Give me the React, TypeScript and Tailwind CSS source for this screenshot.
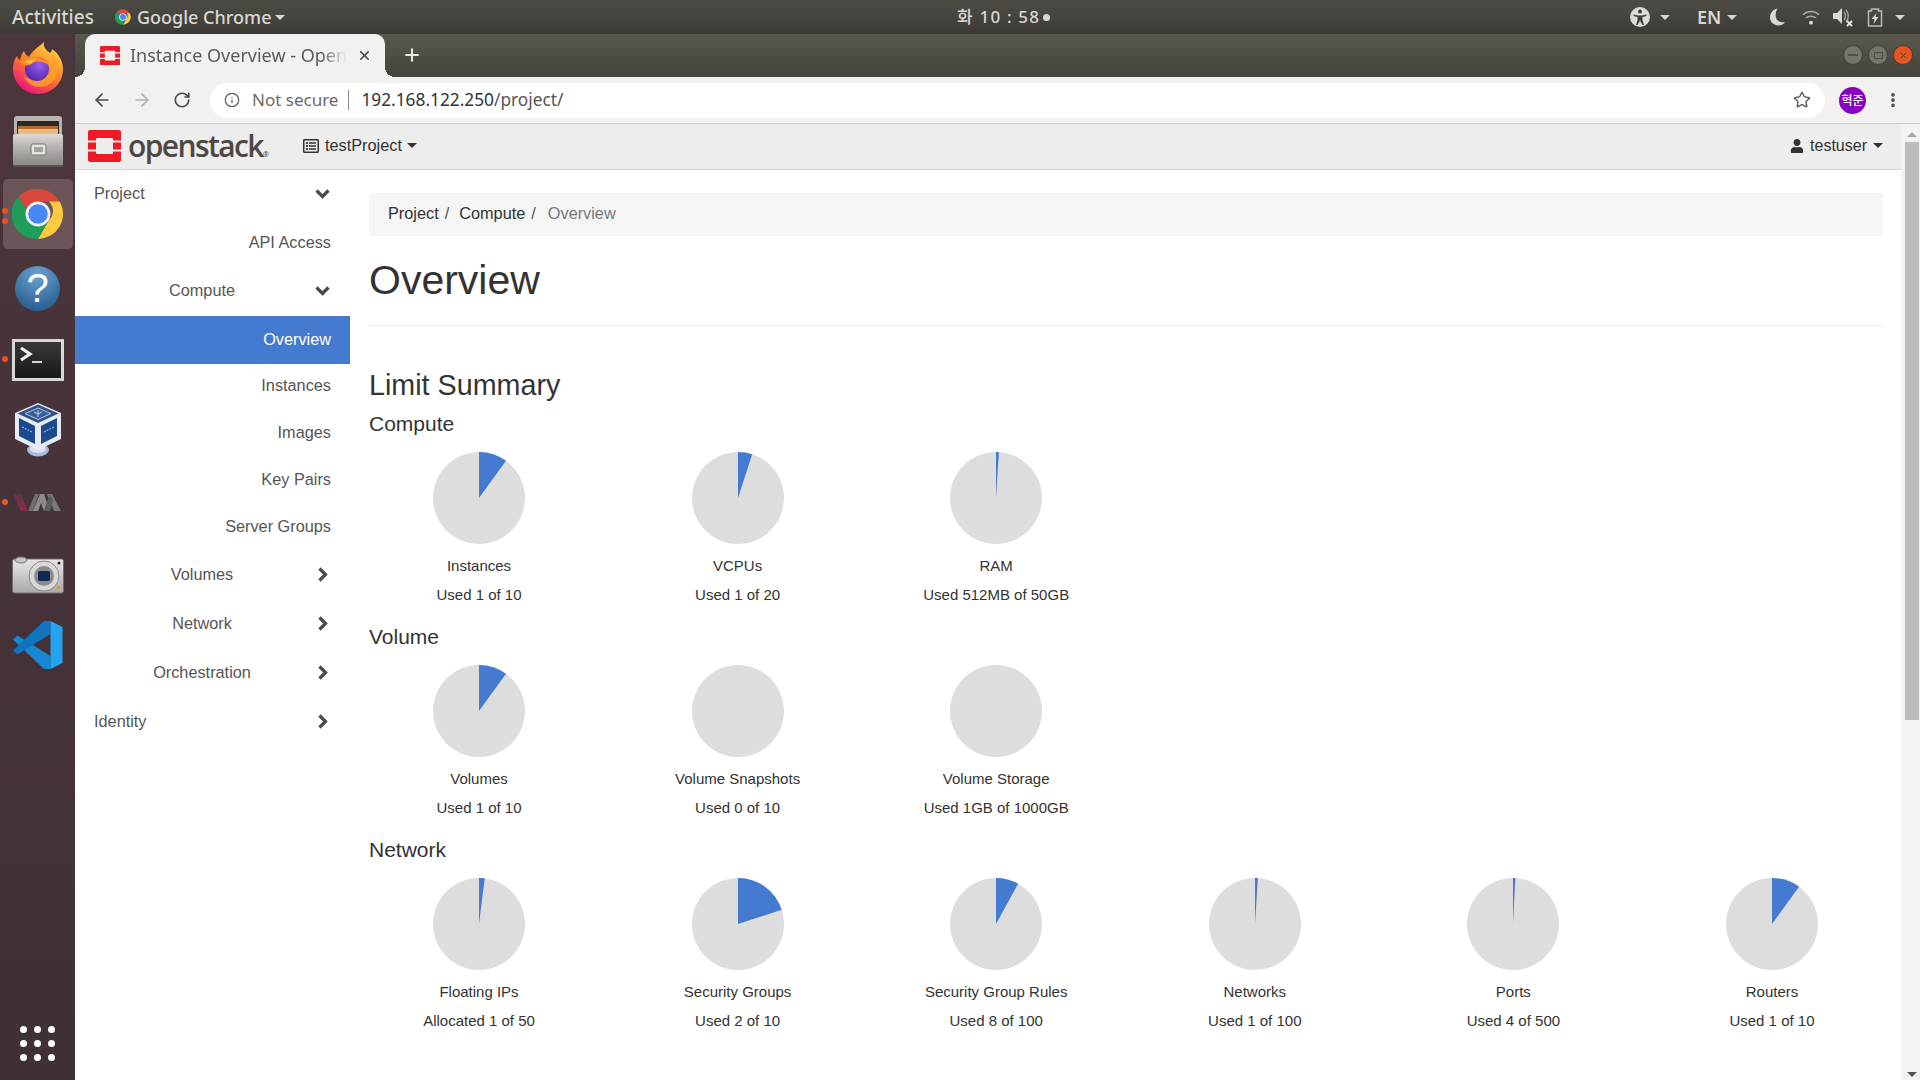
import { ArrowLeft, ArrowRight, Info, MoreVertical, Plus, RotateCw, Star, X } from "lucide-react";
import { FaRegListAlt, FaUser } from "react-icons/fa";
import type { ReactNode } from "react";

const pageFont = { fontFamily: "'Liberation Sans', Arial, sans-serif" };
const uiFont = { fontFamily: "'Noto Sans', sans-serif" };

function polar(cx: number, cy: number, r: number, a: number) {
  const rad = ((a - 90) * Math.PI) / 180;
  return [cx + r * Math.cos(rad), cy + r * Math.sin(rad)];
}

function Pie({ pct }: { pct: number }) {
  const [x, y] = polar(46, 46, 46, pct * 3.6);
  const large = pct > 50 ? 1 : 0;
  return (
    <svg width="92" height="92" viewBox="0 0 92 92">
      <circle cx="46" cy="46" r="46" fill="#dddddd" />
      {pct > 0 && <path d={`M46 46 L46 0 A46 46 0 ${large} 1 ${x} ${y} Z`} fill="#457ad1" />}
    </svg>
  );
}

function Stat({ label, used, pct }: { label: string; used: string; pct: number }) {
  return (
    <div className="w-[220px] shrink-0 flex flex-col items-center text-[15px] text-[#333333]">
      <Pie pct={pct} />
      <div className="mt-[11px] h-[22px] leading-[22px]">{label}</div>
      <div className="mt-[7px] h-[22px] leading-[22px]">{used}</div>
    </div>
  );
}

function Section({ title, items }: { title: string; items: { label: string; used: string; pct: number }[] }) {
  return (
    <div>
      <h4 className="h-[28px] leading-[28px] text-[21px] text-[#333333]">{title}</h4>
      <div className="mt-[14px] flex gap-[38.6px]">
        {items.map((i) => (
          <Stat key={i.label} {...i} />
        ))}
      </div>
    </div>
  );
}

function OpenStackMark({ size }: { size: number }) {
  return (
    <svg width={size} height={size * 0.97} viewBox="0 0 33 32">
      <path
        fill="#ed1c24"
        d="M2 0h29a2 2 0 0 1 2 2v8.500h-8V9a1 1 0 0 0-1-1H9a1 1 0 0 0-1 1v1.500H0V2a2 2 0 0 1 2-2ZM0 12.500h8v7H0ZM25 12.500h8v7h-8ZM0 21.500h8V23a1 1 0 0 0 1 1h15a1 1 0 0 0 1-1v-1.500h8V30a2 2 0 0 1-2 2H2a2 2 0 0 1-2-2Z"
      />
    </svg>
  );
}

function ChromeIcon({ size }: { size: number }) {
  return (
    <svg width={size} height={size} viewBox="0 0 48 48">
      <path d="M24 1a23 23 0 0 1 20 11.500H24a11.500 11.500 0 0 0-11 8L6 8A23 23 0 0 1 24 1Z" fill="#d9483b" />
      <path d="M44 12.500A23 23 0 0 1 24 47l10-17.300a11.500 11.500 0 0 0 0-17.200Z" fill="#fcca3f" />
      <path d="M6 8l8 13.500A11.500 11.500 0 0 0 34 29.700L24 47A23 23 0 0 1 6 8Z" fill="#1e9e58" />
      <circle cx="24" cy="24" r="11.500" fill="#f1f1f1" />
      <circle cx="24" cy="24" r="9" fill="#4688f4" />
    </svg>
  );
}

function FirefoxIcon() {
  return (
    <svg width="50" height="52" viewBox="0 0 50 52">
      <defs>
        <linearGradient id="ffa" x1="0.85" y1="0.1" x2="0.3" y2="1">
          <stop offset="0" stopColor="#ffd53c" />
          <stop offset="0.5" stopColor="#ff7a2a" />
          <stop offset="1" stopColor="#e8127f" />
        </linearGradient>
        <radialGradient id="ffb" cx="0.6" cy="0.35" r="0.7">
          <stop offset="0" stopColor="#9a5be8" />
          <stop offset="1" stopColor="#4f27ac" />
        </radialGradient>
      </defs>
      <path
        d="M31 0c-1 5 2 8 6 11 1-1 2-2 2-4 7 5 11 12 11 20 0 14-11 25-25 25S0 41 0 27c0-6 2-11 4-13 1 2 2 3 3 4 1-4 2-7 4-9 1 3 3 5 5 6 2-5 8-9 15-15Z"
        fill="url(#ffa)"
      />
      <path d="M40 12c4 6 5 12 4 18-1 8-8 15-17 15-8 0-14-5-16-11 5 4 12 5 18 3 6-3 10-8 10-14 0-4 0-8 1-11Z" fill="#ff9d2e" opacity="0.85" />
      <circle cx="24" cy="27" r="12" fill="url(#ffb)" />
      <path d="M6 20c5-5 12-6 18-5 6 1 10 4 12 8-5-3-10-4-14-3-2 0-3 2-5 3-4 1-8 0-11-3Z" fill="#ff8a2a" />
      <path d="M12 20c3-2 7-3 11-3l-4 4c-3 1-5 0-7-1Z" fill="#ffc43a" />
    </svg>
  );
}

function FilesIcon() {
  return (
    <svg width="50" height="51" viewBox="0 0 50 51">
      <defs>
        <linearGradient id="cab" x1="0" y1="0" x2="0" y2="1">
          <stop offset="0" stopColor="#dcdbd8" />
          <stop offset="0.35" stopColor="#b9b8b4" />
          <stop offset="1" stopColor="#878683" />
        </linearGradient>
      </defs>
      <rect x="1" y="0" width="48" height="24" rx="3" fill="#b5b4b0" />
      <rect x="4" y="5" width="42" height="14" fill="#2c2825" />
      <rect x="5" y="10" width="40" height="3" fill="#b76a2f" />
      <rect x="5" y="13" width="40" height="5" fill="#eab97c" />
      <rect x="0" y="18" width="50" height="32" rx="2" fill="url(#cab)" />
      <rect x="0" y="49" width="50" height="2" rx="1" fill="#55544f" />
      <rect x="18" y="28" width="15" height="11" rx="2" fill="#e3e2df" stroke="#77766f" />
      <rect x="21" y="31" width="9" height="5" fill="#a3a29e" />
    </svg>
  );
}

function HelpIcon() {
  return (
    <div className="w-[45px] h-[45px] rounded-full bg-[radial-gradient(circle_at_50%_20%,#6aa3d2,#2f6596_75%)] flex items-center justify-center text-white text-[40px] leading-none" style={pageFont}>
      ?
    </div>
  );
}

function TerminalIcon() {
  return (
    <svg width="52" height="42" viewBox="0 0 52 42">
      <defs>
        <linearGradient id="term" x1="0" y1="0" x2="0" y2="1">
          <stop offset="0" stopColor="#3a3a3a" />
          <stop offset="1" stopColor="#171717" />
        </linearGradient>
      </defs>
      <rect x="1.500" y="1.500" width="49" height="39" fill="url(#term)" stroke="#d8d8d5" strokeWidth="3" />
      <path d="M9 9l9 6-9 6" fill="none" stroke="#f2f2f2" strokeWidth="3.200" />
      <path d="M20 23h10" stroke="#e8e8e8" strokeWidth="1.800" />
    </svg>
  );
}

function VirtualBoxIcon() {
  return (
    <svg width="48" height="54" viewBox="0 0 48 54">
      <ellipse cx="24" cy="47" rx="11" ry="6.500" fill="#a9b9dc" />
      <ellipse cx="24" cy="46" rx="8" ry="4" fill="#dbe3f2" />
      <path d="M24 0 47 10v26L24 47 1 36V10Z" fill="#e6ebf4" />
      <path d="M24 1.500 44.500 10.500 24 20 3.500 10.500Z" fill="#2f5288" />
      <path d="M24 5 37 10.500 24 16.500 11 10.500Z" fill="#3a6098" stroke="#d4deee" strokeWidth="0.800" />
      <path d="M20 9l4 2 4-2M24 7v7" fill="none" stroke="#e6ebf4" strokeWidth="0.800" />
      <path d="M5 15 21 23v18L5 33Z" fill="#1b4a8e" />
      <path d="M43 15 27 23v18l16-8Z" fill="#1b4a8e" />
      <path d="M8 24 18 29M30 29 40 24" stroke="#9db4d8" strokeWidth="1.200" strokeDasharray="2 1" />
    </svg>
  );
}

function VmIcon() {
  return (
    <svg width="48" height="17" viewBox="0 0 48 17">
      <defs>
        <linearGradient id="vmr" x1="0" y1="0" x2="0" y2="1">
          <stop offset="0" stopColor="#5e3640" />
          <stop offset="1" stopColor="#8b2c42" />
        </linearGradient>
        <filter id="vmb"><feGaussianBlur stdDeviation="0.35" /></filter>
      </defs>
      <g filter="url(#vmb)">
        <path d="M0 0h8l7 17H8Z" fill="url(#vmr)" />
        <path d="M15 17l7-17h4l-6 17Z" fill="#6f6d6b" />
        <path d="M20 17 27 0h4l3 9-3 8-3-8-3 8Z" fill="#8d8b89" />
        <path d="M34 0h5l9 17h-7Z" fill="#7a7876" />
        <path d="M31 17l6-17 3 6-3 11Z" fill="#5f5d5c" />
      </g>
    </svg>
  );
}

function CameraIcon() {
  return (
    <svg width="52" height="38" viewBox="0 0 52 38">
      <defs>
        <linearGradient id="cam" x1="0" y1="0" x2="0" y2="1">
          <stop offset="0" stopColor="#e8e8e8" />
          <stop offset="1" stopColor="#a9a9a9" />
        </linearGradient>
      </defs>
      <rect x="0.500" y="3" width="51" height="34" rx="2" fill="url(#cam)" stroke="#6d6d6d" />
      <ellipse cx="9" cy="4" rx="6" ry="3" fill="#c4c4c4" stroke="#777777" />
      <circle cx="32" cy="20" r="15" fill="#d8d8d8" stroke="#8a8a8a" />
      <circle cx="32" cy="20" r="10" fill="#8c8c8c" />
      <rect x="26" y="15" width="12" height="10" rx="2" fill="#0d2a57" />
      <rect x="45" y="30" width="3" height="3" fill="#eb9b22" />
      <circle cx="47" cy="7" r="1.500" fill="#222222" />
    </svg>
  );
}

function VsCodeIcon() {
  return (
    <svg width="50" height="50" viewBox="0 0 100 100">
      <polygon points="9,31 0,39 62,98 75,98 75,72" fill="#1688d3" />
      <polygon points="9,69 0,61 62,2 75,2 75,28" fill="#0f74bd" />
      <polygon points="75,2 99,14 99,86 75,98" fill="#26a3f0" />
    </svg>
  );
}

function Slot({ h = "h-[72px]", children }: { h?: string; children: ReactNode }) {
  return <div className={`${h} w-full relative flex items-center justify-center`}>{children}</div>;
}

function RunDot({ className }: { className: string }) {
  return <span className={`absolute left-[2px] w-[6px] h-[6px] rounded-full bg-[#e95420] ${className}`} />;
}

function Dock() {
  return (
    <div className="w-[75px] shrink-0 bg-[linear-gradient(#4d353c,#3f3036)] flex flex-col items-center">
      <Slot h="h-[71px]"><div className="mb-[4px] flex"><FirefoxIcon /></div></Slot>
      <Slot><FilesIcon /></Slot>
      <Slot>
        <div className="w-[70px] h-[70px] mt-[2px] rounded-[5px] bg-[#6b5559] flex items-center justify-center">
          <ChromeIcon size={52} />
        </div>
        <RunDot className="top-[31px]" />
        <RunDot className="top-[41px]" />
      </Slot>
      <Slot><div className="mt-[6px]"><HelpIcon /></div></Slot>
      <Slot>
        <div className="mt-[6px] flex"><TerminalIcon /></div>
        <RunDot className="top-[35px]" />
      </Slot>
      <Slot><div className="mt-[2px] flex"><VirtualBoxIcon /></div></Slot>
      <Slot>
        <div className="mt-[2px] ml-[-1px] flex"><VmIcon /></div>
        <RunDot className="top-[34px]" />
      </Slot>
      <Slot><div className="mt-[4px] flex"><CameraIcon /></div></Slot>
      <Slot><VsCodeIcon /></Slot>
      <div className="mt-auto mb-[19px] grid grid-cols-3 gap-[7px]">
        {Array.from({ length: 9 }).map((_, i) => (
          <span key={i} className="w-[7px] h-[7px] rounded-full bg-white" />
        ))}
      </div>
    </div>
  );
}

function Caret() {
  return <span className="inline-block w-0 h-0 border-x-[5px] border-x-transparent border-t-[5px] border-t-[#d6d6d0]" />;
}

function TopBar() {
  return (
    <div className="h-[34px] shrink-0 bg-[linear-gradient(#4e4c45,#3b3a35)] flex items-center text-[#d9d8d2] text-[18px] font-medium" style={uiFont}>
      <span className="ml-[12px] w-[83px] whitespace-nowrap text-[19px]">Activities</span>
      <span className="ml-[20px] flex"><ChromeIcon size={16} /></span>
      <span className="ml-[6px] w-[134px] whitespace-nowrap">Google Chrome</span>
      <span className="ml-[4px] flex"><Caret /></span>
      <span className="ml-[672px] w-[83px] whitespace-nowrap text-[17px] tracking-[1.2px]" style={{ fontFamily: "'Noto Sans', 'Noto Sans CJK KR', sans-serif" }}>화 10 : 58</span>
      <span className="ml-[3px] w-[7px] h-[7px] rounded-full bg-[#d9d8d2]" />
      <div className="ml-auto flex items-center">
        <svg width="20" height="20" viewBox="0 0 20 20">
          <circle cx="10" cy="10" r="10" fill="#dcdcd6" />
          <circle cx="10" cy="4.500" r="2" fill="#3f3e39" />
          <path d="M3.500 7.500 8 8.500h4l4.500-1v1.600L12.500 10v3l1.500 5h-1.600L10 13.500 7.600 18H6l1.500-5v-3L3.500 9.100Z" fill="#3f3e39" />
        </svg>
        <span className="ml-[10px] flex"><Caret /></span>
        <span className="ml-[27px] w-[24px] text-[18px] font-semibold leading-none">EN</span>
        <span className="ml-[6px] flex"><Caret /></span>
        <svg className="ml-[33px]" width="15" height="18" viewBox="0 0 16 18">
          <path d="M8 0C3 1 0 5 0 9.500 0 14 4 18 9 18c3 0 6-1.500 7-3.500-6 1-10-2-10-7 0-3 1-6 2-7.500Z" fill="#d9d8d2" />
        </svg>
        <svg className="ml-[17px]" width="18" height="17" viewBox="0 0 19 17" fill="none" stroke="#a8a7a0" strokeWidth="1.600">
          <path d="M1 5.500C6 1 13 1 18 5.500" />
          <path d="M4 9c3-2.500 8-2.500 11 0" />
          <circle cx="9.500" cy="14" r="2" fill="#e0dfd9" stroke="none" />
        </svg>
        <svg className="ml-[13px]" width="20" height="20" viewBox="0 0 20 20">
          <path d="M0 6h4l5-5v16l-5-5H0Z" fill="#d9d8d2" />
          <path d="M11 5c2 2 2 6 0 8M13 3c3 3 3 9 0 12" fill="none" stroke="#a8a7a0" strokeWidth="1.400" />
          <path d="M14 14l5 5M19 14l-5 5" stroke="#e8e8e2" strokeWidth="1.800" />
        </svg>
        <svg className="ml-[14px]" width="16" height="19" viewBox="0 0 15 19">
          <path d="M4 1h7v2h3v15H1V3h3Z" fill="none" stroke="#bcbbb4" strokeWidth="1.500" />
          <path d="M9 5 4 11h3l-1 5 5-7H8Z" fill="#d9d8d2" />
        </svg>
        <span className="ml-[12px] mr-[15px] flex"><Caret /></span>
      </div>
    </div>
  );
}

function TabStrip() {
  return (
    <div className="h-[43px] shrink-0 bg-[linear-gradient(#5a594d,#44433d)] flex items-end pl-[10px] relative">
      <div className="relative w-[300px] h-[43px] bg-[#f2f1f0] rounded-t-[10px] flex items-center pl-[15px] text-[#5a5a58] text-[18px]" style={uiFont}>
        <span className="absolute left-[-10px] bottom-0 w-[10px] h-[10px] bg-[radial-gradient(circle_at_0_0,transparent_10px,#f2f1f0_10px)]" />
        <span className="absolute right-[-10px] bottom-0 w-[10px] h-[10px] bg-[radial-gradient(circle_at_100%_0,transparent_10px,#f2f1f0_10px)]" />
        <OpenStackMark size={20} />
        <span className="ml-[10px] w-[217px] overflow-hidden whitespace-nowrap [mask-image:linear-gradient(to_right,black_88%,transparent)]">Instance Overview - OpenStack</span>
        <X size={15} strokeWidth={2.5} className="ml-[10px] text-[#444444]" />
      </div>
      <Plus size={20} strokeWidth={2.5} className="absolute left-[327px] top-[11px] text-[#e6e6e2]" />
      <div className="absolute right-[7px] top-[11px] flex gap-[5px]">
        <span className="w-[20px] h-[20px] rounded-full bg-[#74736c] border border-[#3f3e39] flex items-center justify-center"><span className="w-[10px] h-[2px] bg-[#4f4e48]" /></span>
        <span className="w-[20px] h-[20px] rounded-full bg-[#74736c] border border-[#3f3e39] flex items-center justify-center"><span className="w-[9px] h-[7px] border border-[#4f4e48]" /></span>
        <span className="w-[20px] h-[20px] rounded-full bg-[#e95420] border border-[#3f3e39] flex items-center justify-center"><X size={11} className="text-[#5d3a12]" /></span>
      </div>
    </div>
  );
}

function Toolbar() {
  return (
    <div className="h-[47px] shrink-0 bg-[#f2f1f0] border-b border-[#cfcfcd] flex items-center">
      <ArrowLeft size={20} strokeWidth={2} className="ml-[17px] text-[#4a4a4a]" />
      <ArrowRight size={20} strokeWidth={2} className="ml-[20px] text-[#b0b0ae]" />
      <RotateCw size={18} strokeWidth={2.2} className="ml-[21px] text-[#4a4a4a]" />
      <div className="ml-[19px] w-[1615px] h-[35px] bg-white rounded-full flex items-center text-[17px]" style={uiFont}>
        <Info size={16} strokeWidth={2} className="ml-[14px] text-[#5f6368]" />
        <span className="ml-[12px] text-[#6a6a6a]">Not secure</span>
        <span className="ml-[10px] w-px h-[20px] bg-[#8a8a8a]" />
        <span className="ml-[12px] text-[#333333] text-[17.3px]">192.168.122.250<span className="text-[#555555]">/project/</span></span>
        <Star size={18} strokeWidth={2} className="ml-auto mr-[14px] text-[#5f6368]" />
      </div>
      <span className="ml-[14px] w-[27px] h-[27px] rounded-full bg-[#8a00c2] text-white text-[12px] font-medium flex items-center justify-center" style={{ fontFamily: "'Noto Sans CJK KR', sans-serif" }}>혁준</span>
      <MoreVertical size={18} strokeWidth={3} className="ml-[18px] text-[#4a4a4a]" />
    </div>
  );
}

function DarkCaret() {
  return <span className="inline-block w-0 h-0 border-x-[5px] border-x-transparent border-t-[5px] border-t-[#333333]" />;
}

function NavBar() {
  return (
    <div className="h-[46px] shrink-0 bg-[#ededed] border-b border-[#d5d5d5] pb-[2px] flex items-center text-[16.3px] text-[#333333]">
      <span className="ml-[13px] flex"><OpenStackMark size={33} /></span>
      <span className="ml-[7px] w-[141px] whitespace-nowrap text-[30px] font-semibold tracking-[-1.6px] text-[#4d4842] leading-none" style={{ fontFamily: "'Open Sans', sans-serif" }}>openstack<span className="text-[7px] tracking-normal">®</span></span>
      <FaRegListAlt size={16} className="ml-[34px] text-[#333333]" />
      <span className="ml-[6px]">testProject</span>
      <span className="ml-[5px] flex"><DarkCaret /></span>
      <FaUser size={14} className="ml-auto" />
      <span className="ml-[6px] text-[16px]">testuser</span>
      <span className="ml-[6px] mr-[18px] flex"><DarkCaret /></span>
    </div>
  );
}

function ChevronDown() {
  return (
    <svg width="15" height="15" viewBox="0 0 15 15" className="shrink-0">
      <path d="M1.500 4.500 7.500 10.500 13.500 4.500" fill="none" stroke="#4a4a4a" strokeWidth="3.200" />
    </svg>
  );
}

function ChevronRight() {
  return (
    <svg width="15" height="15" viewBox="0 0 15 15" className="shrink-0">
      <path d="M4.500 1.500 10.500 7.500 4.500 13.500" fill="none" stroke="#4a4a4a" strokeWidth="3.200" />
    </svg>
  );
}

function Sidebar() {
  const leaf = "h-[46.67px] flex items-center justify-end pr-[19px]";
  const group = "h-[49px] flex items-center pr-[20px]";
  const center = "flex-1 text-center pl-[20px] pr-[6px]";
  return (
    <div className="w-[275px] shrink-0 text-[16.3px] text-[#555555]">
      <div className={`${group} pb-[2px]`}>
        <span className="pl-[19px] flex-1">Project</span>
        <ChevronDown />
      </div>
      <div className="h-[48px] pb-[2px] flex items-center justify-end pr-[19px]">API Access</div>
      <div className="h-[49px] pb-[2px] flex items-center pr-[20px]">
        <span className={center}>Compute</span>
        <ChevronDown />
      </div>
      <div className="h-[48px] mb-[-1px] pb-[2px] bg-[#457ad1] text-white flex items-center justify-end pr-[19px]">Overview</div>
      <div className={`${leaf} pb-[2px]`}>Instances</div>
      <div className={`${leaf} pb-[2px]`}>Images</div>
      <div className={leaf}>Key Pairs</div>
      <div className={leaf}>Server Groups</div>
      {["Volumes", "Network", "Orchestration"].map((n) => (
        <div key={n} className={group}>
          <span className={center}>{n}</span>
          <ChevronRight />
        </div>
      ))}
      <div className={group}>
        <span className="pl-[19px] flex-1">Identity</span>
        <ChevronRight />
      </div>
    </div>
  );
}

const compute = [
  { label: "Instances", used: "Used 1 of 10", pct: 10 },
  { label: "VCPUs", used: "Used 1 of 20", pct: 5 },
  { label: "RAM", used: "Used 512MB of 50GB", pct: 1 },
];
const volume = [
  { label: "Volumes", used: "Used 1 of 10", pct: 10 },
  { label: "Volume Snapshots", used: "Used 0 of 10", pct: 0 },
  { label: "Volume Storage", used: "Used 1GB of 1000GB", pct: 0 },
];
const network = [
  { label: "Floating IPs", used: "Allocated 1 of 50", pct: 2 },
  { label: "Security Groups", used: "Used 2 of 10", pct: 20 },
  { label: "Security Group Rules", used: "Used 8 of 100", pct: 8 },
  { label: "Networks", used: "Used 1 of 100", pct: 1 },
  { label: "Ports", used: "Used 4 of 500", pct: 0.8 },
  { label: "Routers", used: "Used 1 of 10", pct: 10 },
];

function Main() {
  return (
    <div className="flex-1 min-w-0 pl-[19px] pr-[18px] pt-[23px]">
      <div className="h-[43px] pb-[2px] bg-[#f5f5f5] rounded-[4px] flex items-center pl-[19px] text-[16.3px] text-[#333333]">
        <span>Project</span>
        <span className="ml-[6px] mr-[10px] text-[#555555]">/</span>
        <span>Compute</span>
        <span className="ml-[6px] mr-[12px] text-[#555555]">/</span>
        <span className="text-[#777777]">Overview</span>
      </div>
      <h1 className="mt-[20px] h-[48px] leading-[48px] text-[41px] text-[#333333]">Overview</h1>
      <div className="mt-[21px] border-t border-[#eeeeee]" />
      <h3 className="mt-[41px] h-[36px] leading-[36px] text-[28.7px] text-[#333333]">Limit Summary</h3>
      <div className="mt-[7px] flex flex-col gap-[17px]">
        <Section title="Compute" items={compute} />
        <Section title="Volume" items={volume} />
        <Section title="Network" items={network} />
      </div>
    </div>
  );
}

function Scrollbar() {
  return (
    <div className="w-[19px] shrink-0 bg-[#f3f3f3] flex flex-col items-center pl-[2px]">
      <span className="mt-[8px] w-0 h-0 border-x-[5px] border-x-transparent border-b-[5px] border-b-[#a8a8a8]" />
      <div className="mt-[5px] w-[14px] h-[578px] bg-[#bdbdbd]" />
      <span className="mt-auto mb-[3px] w-0 h-0 border-x-[5px] border-x-transparent border-t-[5px] border-t-[#555555]" />
    </div>
  );
}

export default function App() {
  return (
    <div className="w-[1920px] h-[1080px] overflow-hidden flex flex-col bg-white">
      <TopBar />
      <div className="flex-1 min-h-0 flex">
        <Dock />
        <div className="flex-1 min-w-0 flex flex-col">
          <TabStrip />
          <Toolbar />
          <div className="flex-1 min-h-0 flex" style={pageFont}>
            <div className="flex-1 min-w-0 flex flex-col">
              <NavBar />
              <div className="flex-1 min-h-0 flex">
                <Sidebar />
                <Main />
              </div>
            </div>
            <Scrollbar />
          </div>
        </div>
      </div>
    </div>
  );
}
